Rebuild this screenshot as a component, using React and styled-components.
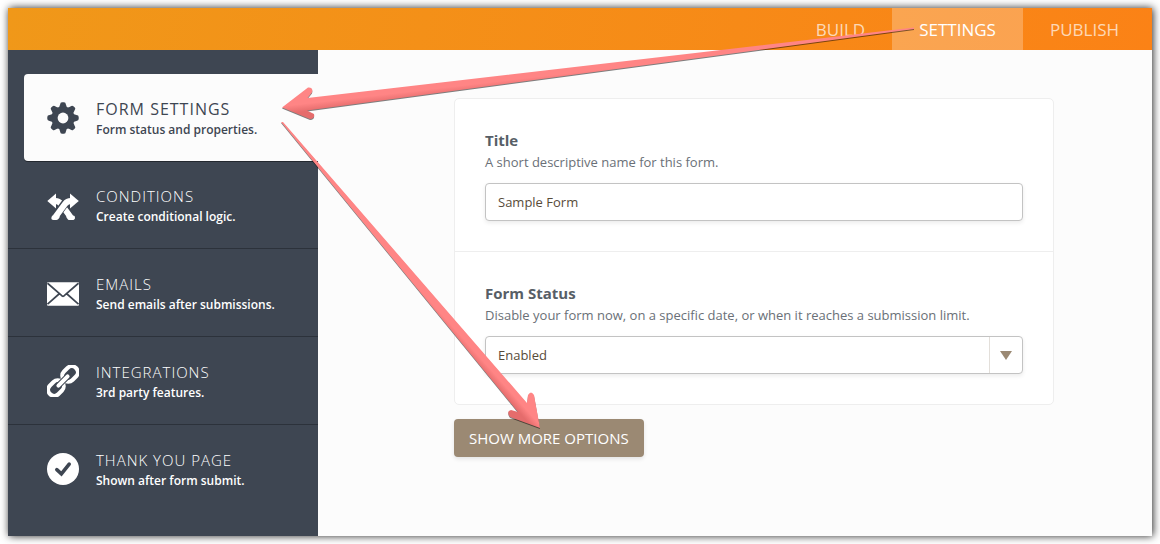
import React from 'react';
import styled, { createGlobalStyle, css } from 'styled-components';

const GlobalStyle = createGlobalStyle`
  * { box-sizing: border-box; }
  body {
    margin: 0;
    background: #fff;
  }
  body, button, input, select {
    font-family: 'Open Sans', 'Noto Sans', sans-serif;
  }
`;

const Page = styled.div`
  display: flex;
  min-height: 100vh;
  padding: 8px;
`;

const Frame = styled.div`
  position: relative;
  flex: 1;
  display: flex;
  flex-direction: column;
  background: #fcfcfc;
  box-shadow: 1px 0 8px rgba(0, 0, 0, 0.85);
`;

const Header = styled.header`
  display: flex;
  justify-content: flex-end;
  height: 42px;
  padding-right: 6px;
  background: linear-gradient(100deg, #f09819, #fb8216);
`;

const Tab = styled.a`
  display: flex;
  align-items: center;
  padding: 0 27px;
  font-size: 17px;
  text-decoration: none;
  color: rgba(255, 255, 255, 0.7);
  ${props => props.$active && css`
    color: #fff;
    background: rgba(255, 255, 255, 0.25);
  `}
`;

const Body = styled.div`
  flex: 1;
  display: flex;
`;

const Sidebar = styled.nav`
  flex: 0 0 310px;
  padding-top: 24px;
  background: #3e4652;
`;

const MenuItem = styled.a`
  display: flex;
  align-items: center;
  gap: 17px;
  height: 88px;
  padding-left: 39px;
  color: #fff;
  text-decoration: none;
  border-bottom: 1px solid #2c323b;
  &:last-child { border-bottom-color: transparent; }
  ${props => props.$active && css`
    height: 87px;
    margin-left: 16px;
    padding-left: 23px;
    color: #3e4652;
    background: #fcfcfc;
    border-bottom: 0;
    border-radius: 4px 0 0 4px;
    box-shadow: 0 1px 0 #23282f;
  `}
`;

const MenuText = styled.span`
  display: flex;
  flex-direction: column;
  padding-top: 2px;
`;

const MenuTitle = styled.span`
  font-size: ${props => (props.$active ? 16 : 15)}px;
  line-height: 22px;
  font-weight: ${props => (props.$active ? 400 : 300)};
  letter-spacing: 1px;
`;

const MenuNote = styled.span`
  font-size: 12px;
  line-height: 20px;
  font-weight: 600;
`;

const Icon = styled.svg`
  flex: none;
  width: 32px;
  height: 32px;
`;

const Main = styled.main`
  flex: 1;
  display: flex;
  justify-content: center;
  padding: 48px 0 0 38px;
`;

const Form = styled.form`
  flex: 0 1 600px;
`;

const Card = styled.div`
  background: #fff;
  border: 1px solid #eee;
  border-radius: 5px;
`;

const Field = styled.div`
  display: flex;
  flex-direction: column;
  padding: 30px;
  & + & { border-top: 1px solid #eee; }
`;

const Label = styled.label`
  font-size: 15px;
  line-height: 22px;
  font-weight: 700;
  color: #575e66;
`;

const Hint = styled.span`
  margin-bottom: 10px;
  font-size: 13px;
  line-height: 22px;
  color: #6a7077;
`;

const box = css`
  height: 38px;
  border: 1px solid #c3c3c3;
  border-radius: 4px;
  background: #fff;
  box-shadow: 0 2px 4px rgba(0, 0, 0, 0.08);
`;

const TextInput = styled.input`
  ${box}
  padding: 0 12px;
  font-size: 13px;
  color: #584b39;
`;

const SelectBox = styled.div`
  ${box}
  display: grid;
  grid-template-columns: 1fr 33px;
`;

const Select = styled.select`
  grid-area: 1 / 1 / 2 / 3;
  appearance: none;
  padding: 0 45px 0 12px;
  font-size: 13px;
  color: #584b39;
  border: 0;
  background: transparent;
`;

const Caret = styled.span`
  grid-area: 1 / 2 / 2 / 3;
  display: flex;
  align-items: center;
  justify-content: center;
  border-left: 1px solid #e3dfda;
  pointer-events: none;
  &:after {
    content: '';
    border: 6px solid transparent;
    border-top: 9px solid #9b8973;
    border-bottom: 0;
  }
`;

const MoreButton = styled.button`
  height: 38px;
  margin-top: 14px;
  padding: 0 15px;
  font-size: 15px;
  color: #fff;
  background: #9b8973;
  border: 0;
  border-radius: 4px;
  box-shadow: 0 2px 4px rgba(0, 0, 0, 0.1);
`;

const Annotations = styled.svg`
  position: absolute;
  top: 0;
  left: 0;
  width: 1144px;
  height: 528px;
  pointer-events: none;
`;

const GearIcon = () => (
  <Icon viewBox="0 0 32 32" aria-hidden="true">
    <g fill="currentColor">
      {[0, 45, 90, 135, 180, 225, 270, 315].map(angle => (
        <path
          key={angle}
          transform={`rotate(${angle} 16 16)`}
          d="M10.4 6.5 Q12.8 5.2 13.1 2.6 Q13.3 .3 15 .3 H17 Q18.7 .3 18.9 2.6 Q19.2 5.2 21.6 6.5 L16 16 Z"
        />
      ))}
    </g>
    <circle cx="16" cy="16" r="8.2" fill="none" stroke="currentColor" strokeWidth="5.6" />
    <circle cx="16" cy="16" r="5.4" fill="#fcfcfc" />
  </Icon>
);

const BranchIcon = () => (
  <Icon viewBox="0 0 32 32" aria-hidden="true">
    <g fill="none" stroke="#fff" strokeWidth="6">
      <path d="M8.5 12 C11.5 12 12.5 13 14 15 L23.5 28" />
      <path d="M20.5 31 H25.8 Q29 30 27.4 26.8" stroke="none" fill="#fff" />
      <path d="M24 12 C20 12 19 13 17.5 15 L8 28" stroke="#3e4652" strokeWidth="8" />
      <path d="M24 12 C20.5 12 19.5 13 18 15 L8.4 28" />
    </g>
    <g fill="#fff">
      <path d="M.3 12 L9 4.4 V19.4 Z" />
      <path d="M31.8 12 L23 4.4 V19.4 Z" />
      <path d="M6 26 L4.6 27.8 Q3.6 31 6.6 31 H9.4 Q11 31 12 29.2 L13 27.6 Z" />
      <path d="M26 26 L27.4 27.8 Q28.4 31 25.4 31 H22.6 Q21 31 20 29.2 L19 27.6 Z" />
    </g>
  </Icon>
);

const MailIcon = () => (
  <Icon viewBox="0 0 32 32" aria-hidden="true">
    <rect y="5.2" width="32" height="23.6" rx="1" fill="#fff" />
    <path
      d="M.5 6.2 L13.6 17.6 Q16 21 18.4 17.6 L31.5 6.2 M.5 27.2 L12 17 M31.5 27.2 L20 17"
      fill="none"
      stroke="#3e4652"
      strokeWidth="1.7"
    />
  </Icon>
);

const ChainIcon = () => (
  <Icon viewBox="0 0 32 32" aria-hidden="true">
    <g transform="rotate(-45 16 16)" fill="none" stroke="#fff" strokeWidth="4">
      <rect x="-2.4" y="10" width="17" height="12" rx="6" />
      <rect x="17.4" y="10" width="17" height="12" rx="6" />
      <path d="M9 16 H23" stroke="#3e4652" strokeWidth="6" strokeLinecap="round" />
      <path d="M9.5 16 H22.5" strokeLinecap="round" />
    </g>
  </Icon>
);

const CheckIcon = () => (
  <Icon viewBox="0 0 32 32" aria-hidden="true">
    <circle cx="16" cy="16" r="16" fill="#fff" />
    <path
      d="M9.8 16.7 L14.4 20.8 L22.2 11.2"
      fill="none"
      stroke="#3e4652"
      strokeWidth="3.6"
      strokeLinecap="round"
    />
  </Icon>
);

const tabs = [
  { title: 'BUILD' },
  { title: 'SETTINGS', active: true },
  { title: 'PUBLISH' },
];

const menu = [
  { title: 'FORM SETTINGS', note: 'Form status and properties.', icon: GearIcon, active: true },
  { title: 'CONDITIONS', note: 'Create conditional logic.', icon: BranchIcon },
  { title: 'EMAILS', note: 'Send emails after submissions.', icon: MailIcon },
  { title: 'INTEGRATIONS', note: '3rd party features.', icon: ChainIcon },
  { title: 'THANK YOU PAGE', note: 'Shown after form submit.', icon: CheckIcon },
];

const toSettings = 'M906 19.5 L299.5 90 L304 84.5 Q305.5 79 300 79.5 L274 99.5 L302 111 Q307 111 306 106 L299 102.5 L906 21 Z';
const toOptions = 'M273 114 L275 114 L519 395 L520 387 Q523 382 526 387 L532 420 L502 409 Q498 403 503 402 L510 404 Z';

const Arrows = () => (
  <Annotations viewBox="0 0 1144 528" aria-hidden="true">
    <defs>
      <linearGradient id="leftward" gradientUnits="userSpaceOnUse" x1="300" y1="90" x2="301.5" y2="103">
        <stop offset=".4" stopColor="#ff8585" />
        <stop offset="1" stopColor="#e56c6c" />
      </linearGradient>
      <linearGradient id="downward" gradientUnits="userSpaceOnUse" x1="519" y1="395" x2="510" y2="403">
        <stop offset=".4" stopColor="#ff8585" />
        <stop offset="1" stopColor="#e56c6c" />
      </linearGradient>
    </defs>
    <g fill="#000" opacity=".5" transform="translate(0 1)">
      <path d={toSettings} />
      <path d={toOptions} />
    </g>
    <path d={toSettings} fill="url(#leftward)" />
    <path d={toOptions} fill="url(#downward)" />
  </Annotations>
);

const App = () => (
  <Page>
    <GlobalStyle />
    <Frame>
      <Header>
        {tabs.map(({ title, active }) => (
          <Tab key={title} href="#" $active={active}>{title}</Tab>
        ))}
      </Header>
      <Body>
        <Sidebar>
          {menu.map(({ title, note, icon: ItemIcon, active }) => (
            <MenuItem key={title} href="#" $active={active}>
              <ItemIcon />
              <MenuText>
                <MenuTitle $active={active}>{title}</MenuTitle>
                <MenuNote>{note}</MenuNote>
              </MenuText>
            </MenuItem>
          ))}
        </Sidebar>
        <Main>
          <Form>
            <Card>
              <Field>
                <Label htmlFor="title">Title</Label>
                <Hint>A short descriptive name for this form.</Hint>
                <TextInput id="title" type="text" defaultValue="Sample Form" />
              </Field>
              <Field>
                <Label htmlFor="status">Form Status</Label>
                <Hint>Disable your form now, on a specific date, or when it reaches a submission limit.</Hint>
                <SelectBox>
                  <Select id="status" defaultValue="enabled">
                    <option value="enabled">Enabled</option>
                    <option value="disabled">Disabled</option>
                  </Select>
                  <Caret />
                </SelectBox>
              </Field>
            </Card>
            <MoreButton type="button">SHOW MORE OPTIONS</MoreButton>
          </Form>
        </Main>
      </Body>
      <Arrows />
    </Frame>
  </Page>
);

export default App;
